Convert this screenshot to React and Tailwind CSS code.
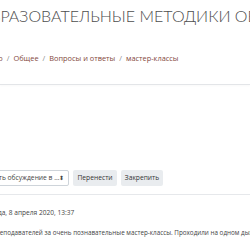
export default function App() {
  return (
    <div className="w-[250px] h-[250px] overflow-hidden bg-white font-['Open_Sans',sans-serif] text-[#333]">
      <h1 className="pt-[5px] ml-[-22px] whitespace-nowrap font-['Lato',sans-serif] text-[16px] leading-[22px] font-light text-[#4d4d4d]">
        ОБРАЗОВАТЕЛЬНЫЕ МЕТОДИКИ ОБУЧЕНИЯ
      </h1>

      <nav className="mt-[24px] ml-[-30px] flex items-center whitespace-nowrap text-[7.4px] leading-[14px]">
        <span className="text-[#84483d]">В начало</span>
        <span className="mx-[4px] text-[#8a8a8a]">/</span>
        <span className="text-[#84483d]">Общее</span>
        <span className="mx-[4px] text-[#8a8a8a]">/</span>
        <span className="text-[#84483d]">Вопросы и ответы</span>
        <span className="mx-[4px] text-[#8a8a8a]">/</span>
        <span className="text-[#84483d]">мастер-классы</span>
      </nav>

      <div className="mt-[19px] border-t border-[#e3e5e8] shadow-[0_1px_2px_rgba(0,0,0,0.04)]" />

      <div className="mt-[85px] flex items-center whitespace-nowrap text-[6.7px]">
        <div className="ml-[-42px] flex h-[16px] w-[111px] flex-none items-center justify-between rounded-[2px] border border-[#ced4da] bg-white pl-[4px] pr-[5px] text-[#444]">
          <span>Переместить обсуждение в ...</span>
          <span className="text-[6px] leading-none">⬍</span>
        </div>
        <button className="ml-[4px] h-[16px] w-[44px] flex-none rounded-[2px] bg-[#e9ecef] text-[#333]">Перенести</button>
        <button className="ml-[4px] h-[16px] w-[42px] flex-none rounded-[2px] bg-[#e9ecef] text-[#333]">Закрепить</button>
      </div>

      <div className="mt-[8px] border-t border-[#e6e8eb]" />

      <p className="mt-[12px] ml-[-13px] whitespace-nowrap text-[6.6px] leading-[12px] text-[#444]">
        среда, 8 апреля 2020, 13:37
      </p>

      <p className="mt-[8px] ml-[-8px] whitespace-nowrap text-[6.3px] leading-[12px] text-[#444]">
        преподавателей за очень познавательные мастер-классы. Проходили на одном дыхании.
      </p>
    </div>
  );
}
